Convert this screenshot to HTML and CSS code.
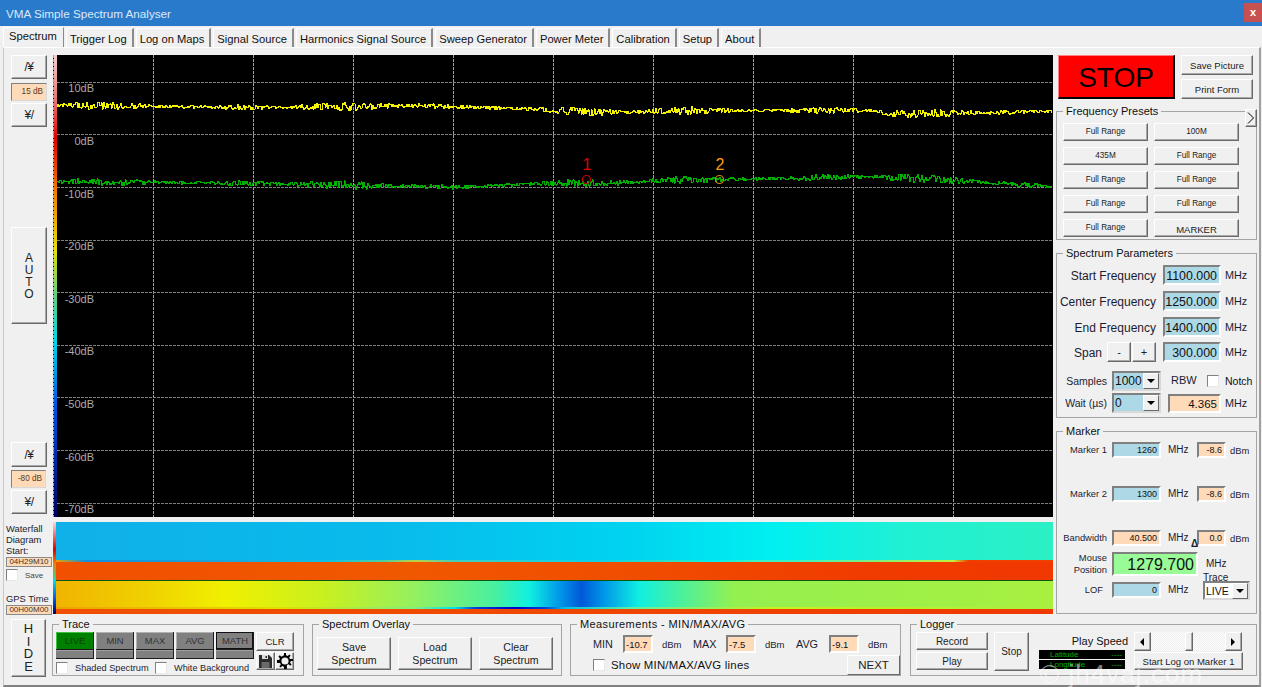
FILE: index.html
```html
<!DOCTYPE html>
<html lang="en">
<head>
  <meta charset="UTF-8">
  <title>VMA Simple Spectrum Analyser</title>
  <link rel="stylesheet" href="styles.css">
</head>
<body>
<div class="window">

  <div class="titlebar">
    <span class="title">VMA Simple Spectrum Analyser</span>
    <span class="close">x</span>
  </div>

  <div class="tabs">
    <div class="tab active">Spectrum</div>
    <div class="tab">Trigger Log</div>
    <div class="tab">Log on Maps</div>
    <div class="tab">Signal Source</div>
    <div class="tab">Harmonics Signal Source</div>
    <div class="tab">Sweep Generator</div>
    <div class="tab">Power Meter</div>
    <div class="tab">Calibration</div>
    <div class="tab">Setup</div>
    <div class="tab">About</div>
  </div>

  <div class="pane">
    <div class="layout">

      <div class="scale-col">
        <button class="btn scale-btn">/&yen;</button>
        <div class="scale-val">15 dB</div>
        <button class="btn scale-btn">&yen;/</button>
        <button class="btn auto-btn">A<br>U<br>T<br>O</button>
        <button class="btn scale-btn low">/&yen;</button>
        <div class="scale-val narrow">-80 dB</div>
        <button class="btn scale-btn">&yen;/</button>
      </div>

      <div class="chart">
        <svg id="plot" width="1000" height="462" viewBox="0 0 1000 462">
          <defs>
            <linearGradient id="colourbar" x1="0" y1="0" x2="0" y2="1">
              <stop offset="0" stop-color="#f4d0d0"/>
              <stop offset="0.1" stop-color="#e87070"/>
              <stop offset="0.18" stop-color="#e00000"/>
              <stop offset="0.3" stop-color="#f08000"/>
              <stop offset="0.42" stop-color="#e8e000"/>
              <stop offset="0.52" stop-color="#60d080"/>
              <stop offset="0.62" stop-color="#00d8e8"/>
              <stop offset="0.76" stop-color="#0050e0"/>
              <stop offset="1" stop-color="#000060"/>
            </linearGradient>
          </defs>
          <rect class="plot-bg" width="1000" height="462"/>
          <g class="grid-v">
            <line x1="0.5" y1="0" x2="0.5" y2="462"/>
            <line x1="100.5" y1="0" x2="100.5" y2="462"/>
            <line x1="200.5" y1="0" x2="200.5" y2="462"/>
            <line x1="300.5" y1="0" x2="300.5" y2="462"/>
            <line x1="400.5" y1="0" x2="400.5" y2="462"/>
            <line x1="500.5" y1="0" x2="500.5" y2="462"/>
            <line x1="600.5" y1="0" x2="600.5" y2="462"/>
            <line x1="700.5" y1="0" x2="700.5" y2="462"/>
            <line x1="800.5" y1="0" x2="800.5" y2="462"/>
            <line x1="900.5" y1="0" x2="900.5" y2="462"/>
          </g>
          <g class="grid-h">
            <line x1="0" y1="27.5" x2="1000" y2="27.5"/>
            <line x1="0" y1="79.5" x2="1000" y2="79.5"/>
            <line x1="0" y1="132.5" x2="1000" y2="132.5"/>
            <line x1="0" y1="185.5" x2="1000" y2="185.5"/>
            <line x1="0" y1="237.5" x2="1000" y2="237.5"/>
            <line x1="0" y1="290.5" x2="1000" y2="290.5"/>
            <line x1="0" y1="342.5" x2="1000" y2="342.5"/>
            <line x1="0" y1="395.5" x2="1000" y2="395.5"/>
            <line x1="0" y1="448.5" x2="1000" y2="448.5"/>
          </g>
          <rect x="1" width="3" height="462" fill="url(#colourbar)"/>
          <g class="db-labels">
            <text x="41" y="37">10dB</text>
            <text x="41" y="90">0dB</text>
            <text x="41" y="143">-10dB</text>
            <text x="41" y="195">-20dB</text>
            <text x="41" y="248">-30dB</text>
            <text x="41" y="300">-40dB</text>
            <text x="41" y="353">-50dB</text>
            <text x="41" y="406">-60dB</text>
            <text x="41" y="458">-70dB</text>
          </g>
          <polyline id="traceMax" class="trace yellow" points=""/>
          <polyline id="traceLive" class="trace green" points=""/>
          <circle class="mark-1" cx="533.5" cy="124.5" r="4"/>
          <circle class="mark-2" cx="666.5" cy="124.5" r="4"/>
          <text class="mark-num red" x="534" y="115">1</text>
          <text class="mark-num orange" x="667" y="115">2</text>
        </svg>
      </div>

      <div class="side">
        <div class="side-top">
          <button class="stop">STOP</button>
          <div class="side-top-btns">
            <button class="btn small-btn">Save Picture</button>
            <button class="btn small-btn">Print Form</button>
          </div>
        </div>

        <fieldset class="group presets">
          <legend>Frequency Presets</legend>
          <button class="btn more-btn">
            <svg width="8" height="12" viewBox="0 0 8 12"><path fill="none" stroke="#000" d="M1 .5l5.500 5.500L1 11.500"/></svg>
          </button>
          <div class="preset-grid">
            <button class="btn preset">Full Range</button>
            <button class="btn preset">100M</button>
            <button class="btn preset">435M</button>
            <button class="btn preset">Full Range</button>
            <button class="btn preset">Full Range</button>
            <button class="btn preset">Full Range</button>
            <button class="btn preset">Full Range</button>
            <button class="btn preset">Full Range</button>
            <button class="btn preset">Full Range</button>
            <button class="btn preset marker-preset">MARKER</button>
          </div>
        </fieldset>

        <fieldset class="group params">
          <legend>Spectrum Parameters</legend>
          <div class="param-row">
            <span class="param-label">Start Frequency</span>
            <div class="field blue param-field">1100.000</div>
            <span class="unit">MHz</span>
          </div>
          <div class="param-row">
            <span class="param-label">Center Frequency</span>
            <div class="field blue param-field">1250.000</div>
            <span class="unit">MHz</span>
          </div>
          <div class="param-row">
            <span class="param-label">End Frequency</span>
            <div class="field blue param-field">1400.000</div>
            <span class="unit">MHz</span>
          </div>
          <div class="param-row span-row">
            <span class="param-label short">Span</span>
            <button class="btn span-btn">-</button>
            <button class="btn span-btn">+</button>
            <div class="field blue param-field">300.000</div>
            <span class="unit">MHz</span>
          </div>
          <div class="sample-row">
            <span class="sample-label">Samples</span>
            <div class="combo blue"><span>1000</span><i class="combo-arrow"></i></div>
            <span class="rbw">RBW</span>
            <input type="checkbox" class="check notch-check">
            <span class="notch">Notch</span>
          </div>
          <div class="sample-row wait">
            <span class="sample-label">Wait (&micro;s)</span>
            <div class="combo blue"><span>0</span><i class="combo-arrow"></i></div>
            <div class="field peach rbw-field">4.365</div>
            <span class="unit">MHz</span>
          </div>
        </fieldset>

        <fieldset class="group marker">
          <legend>Marker</legend>
          <div class="marker-row">
            <span class="marker-label">Marker 1</span>
            <div class="field blue marker-field">1260</div>
            <span class="marker-unit">MHz</span>
            <div class="field peach dbm-field">-8.6</div>
            <span class="marker-dbm">dBm</span>
          </div>
          <div class="marker-row spaced">
            <span class="marker-label">Marker 2</span>
            <div class="field blue marker-field">1300</div>
            <span class="marker-unit">MHz</span>
            <div class="field peach dbm-field">-8.6</div>
            <span class="marker-dbm">dBm</span>
          </div>
          <div class="marker-row spaced">
            <span class="marker-label">Bandwidth</span>
            <div class="field peach marker-field">40.500</div>
            <span class="marker-unit">MHz<b class="delta">&Delta;</b></span>
            <div class="field peach dbm-field">0.0</div>
            <span class="marker-dbm">dBm</span>
          </div>
          <div class="marker-bottom">
            <div class="marker-bottom-left">
              <div class="mouse-row">
                <span class="marker-label">Mouse<br>Position</span>
                <div class="field green-field mouse-field">1279.700</div>
              </div>
              <div class="marker-row lof">
                <span class="marker-label lof-label">LOF</span>
                <div class="field blue marker-field">0</div>
                <span class="marker-unit">MHz</span>
              </div>
            </div>
            <div class="marker-bottom-right">
              <span class="mouse-unit">MHz</span>
              <span class="trace-label">Trace</span>
              <div class="combo live-combo"><span>LIVE</span><i class="combo-arrow"></i></div>
            </div>
          </div>
        </fieldset>
      </div>

      <div class="wf-col">
        <div class="wf-text">Waterfall<br>Diagram<br>Start:</div>
        <div class="time-field">04H29M10</div>
        <div class="wf-save">
          <input type="checkbox" class="check">
          <span>Save</span>
        </div>
        <div class="wf-text gps">GPS Time</div>
        <div class="time-field">00H00M00</div>
      </div>

      <div class="waterfall">
        <div class="wf-strip"></div>
        <div class="wf-bands">
          <div class="band band-a"></div>
          <div class="band band-a-edge"></div>
          <div class="band band-b"></div>
          <div class="band band-line"></div>
          <div class="band band-c"></div>
          <div class="band band-c-edge"></div>
          <div class="band band-d"></div>
        </div>
      </div>

    </div>

    <div class="bottom">
      <button class="btn hide-btn">H<br>I<br>D<br>E</button>

      <fieldset class="group trace-group">
        <legend>Trace</legend>
        <div class="trace-inner">
          <div>
            <div class="toggles">
              <div class="toggle on"><span>LIVE</span><i></i></div>
              <div class="toggle"><span>MIN</span><i></i></div>
              <div class="toggle"><span>MAX</span><i></i></div>
              <div class="toggle"><span>AVG</span><i></i></div>
              <div class="toggle pressed"><span>MATH</span><i></i></div>
            </div>
            <div class="trace-checks">
              <input type="checkbox" class="check">
              <span class="trace-check-text">Shaded Spectrum</span>
              <input type="checkbox" class="check">
              <span class="trace-check-text">White Background</span>
            </div>
          </div>
          <div class="clr-col">
            <button class="btn clr-btn">CLR</button>
            <div class="icon-btns">
              <button class="btn icon-btn">
                <svg width="13" height="13" viewBox="0 0 13 13"><path fill="#2b2b2b" d="M0 0h10l3 3v10H0z"/><path fill="#dcdcdc" d="M3 0h6v4H3z"/><path fill="#2b2b2b" d="M6.5 1h1.500v2H6.500z"/><path fill="#6a6a6a" d="M2.500 7h8v6h-8z"/></svg>
              </button>
              <button class="btn icon-btn">
                <svg width="16" height="16" viewBox="0 0 16 16"><path fill="#000" d="M7 0h2v2.200l1.800.7 1.500-1.500 1.400 1.400-1.500 1.500.7 1.800H16v2h-2.200l-.7 1.800 1.500 1.500-1.400 1.400-1.500-1.500-1.800.7V16H7v-2.200l-1.800-.7-1.500 1.500-1.400-1.400 1.500-1.500-.7-1.800H0V7h2.200l.7-1.800-1.500-1.500 1.400-1.400 1.500 1.500L7 2.200z"/><circle cx="8" cy="8" r="3.600" fill="#f0f0f0"/></svg>
              </button>
            </div>
          </div>
        </div>
      </fieldset>

      <fieldset class="group overlay-group">
        <legend>Spectrum Overlay</legend>
        <div class="overlay-btns">
          <button class="btn overlay-btn">Save<br>Spectrum</button>
          <button class="btn overlay-btn">Load<br>Spectrum</button>
          <button class="btn overlay-btn">Clear<br>Spectrum</button>
        </div>
      </fieldset>

      <fieldset class="group measure-group">
        <legend>Measurements - MIN/MAX/AVG</legend>
        <div class="measure-row">
          <span class="m-label min">MIN</span>
          <div class="field peach m-field">-10.7</div>
          <span class="m-unit">dBm</span>
          <span class="m-label">MAX</span>
          <div class="field peach m-field">-7.5</div>
          <span class="m-unit">dBm</span>
          <span class="m-label">AVG</span>
          <div class="field peach m-field">-9.1</div>
          <span class="m-unit">dBm</span>
        </div>
        <div class="measure-row second">
          <input type="checkbox" class="check">
          <span class="m-show">Show MIN/MAX/AVG lines</span>
          <button class="btn next-btn">NEXT</button>
        </div>
      </fieldset>

      <fieldset class="group logger-group">
        <legend>Logger</legend>
        <div class="logger-inner">
          <div class="logger-col">
            <button class="btn log-btn">Record</button>
            <button class="btn log-btn">Play</button>
          </div>
          <button class="btn log-stop">Stop</button>
          <div class="logger-grid">
            <span class="play-speed">Play Speed</span>
            <div class="scrollbar">
              <button class="btn sb-arrow"><i class="tri-left"></i></button>
              <div class="sb-track"><div class="btn sb-thumb"></div></div>
              <button class="btn sb-arrow"><i class="tri-right"></i></button>
            </div>
            <div class="gps-box">
              <div class="gps-line"><span>Latitude</span><span>----</span></div>
              <div class="gps-line"><span>Longitude</span><span>----</span></div>
            </div>
            <button class="btn start-log">Start Log on Marker 1</button>
          </div>
        </div>
      </fieldset>
    </div>
  </div>

  <div class="watermark">&copy; jh4vaj.com</div>
</div>
<script src="script.js"></script>
</body>
</html>
```

FILE: styles.css
```css
* {
  box-sizing: border-box;
}

html, body {
  margin: 0;
  height: 100%;
}

body {
  background-color: #f0f0f0;
  font-family: 'Liberation Sans', Arial, sans-serif;
  font-size: 12px;
  color: #111;
  overflow: hidden;
}

.window {
  position: relative;
  width: 1262px;
  height: 687px;
  overflow: hidden;
  background-color: #f0f0f0;
}

/* title bar */
.titlebar {
  height: 26px;
  background-color: #2a7acb;
  color: #dbe9f7;
  display: flex;
  align-items: center;
  justify-content: space-between;
  padding-left: 6px;
  padding-top: 1px;
}

.title {
  font-size: 11.7px;
}

.close {
  width: 18px;
  height: 19px;
  margin-top: -2px;
  background-color: #c75050;
  color: #fff;
  font-weight: bold;
  font-size: 11px;
  text-align: center;
  line-height: 18px;
}

/* tabs */
.tabs {
  height: 21px;
  display: flex;
  padding-left: 3px;
  align-items: flex-end;
}

.tab {
  height: 19px;
  padding: 4px 5px 0 3px;
  margin-right: 2px;
  border-left: 1px solid #fff;
  border-top: 1px solid #fff;
  border-right: 2px solid #8a8a8a;
  font-size: 11.2px;
  white-space: nowrap;
}

.tab.active {
  height: 20px;
  padding: 2px 6px 0 5px;
  margin-right: 2px;
  border-right: 1px solid #8a8a8a;
}

/* tab page */
.pane {
  width: 1258px;
  height: 640px;
  margin-left: 3px;
  padding-top: 7px;
  border-left: 1px solid #c8c8c8;
  border-top: 1px solid #fff;
  border-right: 2px solid #a0a0a0;
  border-bottom: 2px solid #808080;
}

.layout {
  display: grid;
  grid-template-columns: 49px 1000px 204px;
  grid-template-rows: 462px 92px;
  row-gap: 5px;
}

/* generic bevelled controls */
.btn {
  display: block;
  margin: 0;
  padding: 0;
  background-color: #f0f0f0;
  border-style: solid;
  border-width: 1px;
  border-color: #fff #696969 #696969 #fff;
  box-shadow: inset -1px -1px 0 #a8a8a8;
  font-family: inherit;
  color: #222;
  text-align: center;
}

.field {
  border-style: solid;
  border-width: 2px;
  border-color: #808080 #fff #fff #808080;
  text-align: right;
  padding-right: 2px;
  white-space: nowrap;
}

.blue {
  background-color: #add8e6;
}

.peach {
  background-color: #ffdab9;
}

.green-field {
  background-color: #98fb98;
}

.check {
  appearance: none;
  display: block;
  width: 12px;
  height: 12px;
  margin: 0;
  flex: none;
  background-color: #fff;
  border-style: solid;
  border-width: 1px;
  border-color: #808080 #e8e8e8 #e8e8e8 #808080;
}

.combo {
  display: flex;
  align-items: center;
  justify-content: space-between;
  width: 49px;
  height: 20px;
  border-style: solid;
  border-width: 2px;
  border-color: #808080 #d8d8d8 #d8d8d8 #808080;
  font-size: 12px;
  padding-left: 1px;
}

.combo-arrow {
  display: block;
  width: 16px;
  height: 16px;
  position: relative;
  background-color: #f0f0f0;
  border-style: solid;
  border-width: 1px;
  border-color: #fff #696969 #696969 #fff;
}

.combo-arrow::after {
  content: "";
  position: absolute;
  left: 3px;
  top: 5px;
  border-style: solid;
  border-width: 4px 4px 0 4px;
  border-color: #000 transparent transparent transparent;
}

/* group boxes */
.group {
  margin: 0;
  padding: 0;
  min-width: 0;
  border: 1px solid #a4a4a4;
}

.group legend {
  height: 14px;
  line-height: 14px;
  margin-left: 6px;
  padding: 0 3px;
  font-size: 11px;
}

/* left column next to the plot */
.scale-col {
  padding-left: 7px;
  display: flex;
  flex-direction: column;
}

.scale-btn {
  width: 36px;
  height: 24px;
  font-size: 12px;
  letter-spacing: -0.5px;
  font-family: 'Liberation Sans', 'Noto Sans CJK JP', sans-serif;
}

.scale-btn.low {
  height: 25px;
  margin-top: 118px;
}

.scale-val {
  width: 36px;
  height: 18px;
  margin: 4px 0 2px;
  background-color: #ffdab9;
  border: 1px solid #808080;
  border-color: #808080 #d8d8d8 #d8d8d8 #808080;
  font-size: 8.2px;
  line-height: 16px;
  text-align: right;
  padding-right: 3px;
  color: #5a3a20;
}

.scale-val.narrow {
  width: 35px;
  margin: 3px 0 2px;
}

.auto-btn {
  width: 36px;
  height: 97px;
  margin-top: 100px;
  font-size: 12px;
  line-height: 12px;
}

.chart svg {
  display: block;
}

.plot-bg {
  fill: #000;
}

.grid-v line {
  stroke: #a0a0a0;
  stroke-dasharray: 3 1;
  shape-rendering: crispEdges;
}

.grid-h line {
  stroke: #808080;
  stroke-dasharray: 3 1;
  shape-rendering: crispEdges;
}

.db-labels text {
  fill: #ababab;
  font-size: 11px;
  text-anchor: end;
}

.trace {
  fill: none;
  stroke-width: 1;
  shape-rendering: crispEdges;
}

.yellow {
  stroke: #f4f400;
}

.green {
  stroke: #00b000;
}

.mark-1, .mark-2 {
  fill: none;
  stroke-width: 1.2;
}

.mark-1 {
  stroke: #d00000;
}

.mark-2 {
  stroke: #d08810;
}

.mark-num {
  font-size: 16px;
  text-anchor: middle;
}

.mark-num.red {
  fill: #e00000;
}

.mark-num.orange {
  fill: #ff9a10;
}

/* right hand side */
.side {
  grid-column: 3;
  grid-row: 1 / span 2;
  padding-left: 3px;
}

.side-top {
  display: flex;
  padding-left: 2px;
  height: 44px;
}

.stop {
  width: 117px;
  height: 44px;
  margin: 0;
  padding: 2px 0 0;
  background-color: #ff0000;
  border-style: solid;
  border-width: 1px 2px 2px 1px;
  border-color: #ff8080 #000 #000 #ff8080;
  font-family: inherit;
  font-size: 28px;
  color: #000;
}

.side-top-btns {
  margin-left: 6px;
  display: flex;
  flex-direction: column;
  gap: 4px;
}

.small-btn {
  width: 72px;
  height: 20px;
  font-size: 9.5px;
}

.presets {
  position: relative;
  width: 201px;
  height: 136px;
  margin-top: 5px;
  padding-top: 5px;
}

.more-btn {
  position: absolute;
  right: -1px;
  top: -9px;
  width: 12px;
  height: 18px;
  display: flex;
  align-items: center;
  justify-content: center;
}

.preset-grid {
  display: grid;
  grid-template-columns: 85px 85px;
  grid-auto-rows: 18px;
  gap: 6px;
  margin-left: 6px;
}

.preset {
  font-size: 8.2px;
  padding-bottom: 1px;
}

.marker-preset {
  font-size: 9.5px;
  padding: 3px 0 0;
}

.params {
  width: 201px;
  height: 172px;
  margin-top: 6px;
  padding-top: 5px;
}

.param-row {
  display: flex;
  align-items: center;
  height: 20px;
  margin-bottom: 6px;
}

.span-row {
  margin-top: -1px;
}

.param-label {
  width: 99px;
  margin-right: 7px;
  padding-top: 1px;
  text-align: right;
  font-size: 12px;
  color: #1c1c30;
  white-space: nowrap;
}

.param-label.short {
  width: 45px;
  margin-right: 5px;
}

.param-field {
  width: 58px;
  height: 20px;
  font-size: 12.4px;
  line-height: 18px;
}

.span-btn {
  width: 24px;
  height: 20px;
  margin-right: 1px;
  font-size: 11px;
}

.span-btn + .param-field {
  margin-left: 6px;
}

.unit {
  margin-left: 4px;
  font-size: 10.8px;
  color: #1c1c30;
}

.sample-row {
  display: flex;
  align-items: center;
  height: 20px;
  margin-top: 9px;
}

.sample-row.wait {
  margin-top: 2px;
}

.sample-label {
  width: 50px;
  margin-right: 5px;
  margin-bottom: 1px;
  text-align: right;
  font-size: 10.5px;
  color: #1c1c30;
  white-space: nowrap;
}

.rbw {
  margin-left: 10px;
  margin-bottom: 2px;
  width: 36px;
  font-size: 11px;
  color: #1c1c30;
}

.notch {
  margin-left: 6px;
  font-size: 10.5px;
}

.rbw-field {
  width: 53px;
  height: 19px;
  margin: 1px 0 0 7px;
  font-size: 11.5px;
  line-height: 16px;
}

.marker {
  width: 201px;
  height: 190px;
  margin-top: 6px;
  padding-top: 4px;
}

.marker-row {
  display: flex;
  align-items: center;
  height: 16px;
}

.marker-row.spaced {
  margin-top: 28px;
}

.marker-label {
  width: 50px;
  margin-right: 5px;
  margin-bottom: 1px;
  flex: none;
  text-align: right;
  font-size: 9.4px;
  line-height: 12px;
  color: #1c1c30;
  white-space: nowrap;
}

.lof-label {
  width: 46px;
  margin-right: 9px;
}

.marker-field {
  width: 49px;
  height: 16px;
  font-size: 9px;
  line-height: 13px;
}

.marker-unit {
  position: relative;
  width: 36px;
  padding-left: 7px;
  margin-bottom: 1px;
  font-size: 10px;
  color: #1c1c30;
  flex: none;
}

.delta {
  position: absolute;
  left: 30px;
  top: 7px;
  font-size: 10px;
  line-height: 10px;
}

.dbm-field {
  width: 29px;
  height: 16px;
  font-size: 9px;
  line-height: 13px;
}

.marker-dbm {
  margin-left: 4px;
  font-size: 9.4px;
  color: #1c1c30;
}

.marker-bottom {
  display: flex;
  margin-top: 6px;
}

.marker-bottom-left {
  width: 146px;
}

.mouse-row {
  display: flex;
  align-items: center;
  height: 24px;
}

.mouse-field {
  width: 86px;
  height: 24px;
  font-size: 16px;
  line-height: 21px;
  flex: none;
}

.lof {
  margin-top: 6px;
}

.marker-bottom-right {
  display: flex;
  flex-direction: column;
}

.mouse-unit {
  margin: 6px 0 0 3px;
  font-size: 10px;
  line-height: 12px;
  color: #1c1c30;
}

.trace-label {
  margin-top: 2px;
  font-size: 10px;
  line-height: 11px;
  color: #1c1c30;
}

.live-combo {
  width: 47px;
  height: 19px;
  margin-top: -2px;
  background-color: #fff;
  font-size: 10.5px;
}

/* waterfall */
.wf-col {
  grid-column: 1;
  grid-row: 2;
  padding: 1px 0 0 2px;
  display: flex;
  flex-direction: column;
}

.wf-text {
  font-size: 9.4px;
  line-height: 11px;
  color: #1a2430;
}

.wf-text.gps {
  margin-top: 12px;
}

.time-field {
  width: 46px;
  height: 10px;
  margin-top: 1px;
  background-color: #ffdab9;
  border: 1px solid #8a8a8a;
  font-size: 8px;
  line-height: 8px;
  text-align: center;
  color: #443322;
}

.wf-save {
  display: flex;
  align-items: center;
  gap: 7px;
  margin-top: 2px;
  font-size: 8px;
  color: #444;
}

.waterfall {
  grid-column: 2;
  grid-row: 2;
  display: flex;
}

.wf-strip {
  width: 3px;
  background: linear-gradient(#f8d8d8 0, #e00000 30%, #f08000 45%, #40d080 60%, #00d8e8 64%, #0050e0 85%, #000060 100%);
}

.wf-bands {
  flex: 1;
  display: flex;
  flex-direction: column;
}

.band-a {
  height: 38px;
  background: linear-gradient(90deg, #10b0e8 0, #08bcec 35%, #00d4f0 58%, #00f0f0 72%, #20f0d4 85%, #2cf0c4 100%);
}

.band-a-edge {
  height: 2px;
  background: linear-gradient(90deg, #f0a000 0, #1090e0 3%, #20a0d8 14%, #10c0e8 27%, #50d0a0 33%, #c0d040 36%, #40d0c0 40%, #10d0e8 54%, #30e0c0 62%, #00f0f0 66%, #40f0c0 70%, #40f0c0 74%, #c0f040 90%, #f04000 91.5%, #f04000 100%);
}

.band-b {
  height: 18px;
  background: linear-gradient(90deg, #f05000 0, #f05800 35%, #f04c00 60%, #f03c00 80%, #f03800 100%);
}

.band-line {
  height: 1px;
  background-color: #0a5a10;
}

.band-c {
  height: 26px;
  background: linear-gradient(90deg, #f0b400 0, #f0d000 9%, #f0f000 17%, #c8f020 27%, #94f060 36%, #48f0a0 44%, #10f0e0 47.5%, #0098e8 50.5%, #0058d8 52.7%, #0098e8 55%, #10f0e0 58.5%, #48f0a0 62.5%, #94f050 68%, #a8f040 100%);
}

.band-c-edge {
  height: 2px;
  background: linear-gradient(90deg, #f0a000 0, #e0e000 22%, #80f080 36%, #00e0f0 40%, #0040d8 42%, #0000c8 46%, #0040d8 49%, #00c0e8 51%, #60f0a0 58%, #c8f020 72%, #a8f040 100%);
}

.band-d {
  height: 5px;
  background: linear-gradient(90deg, #f05000 0, #f04800 50%, #f03800 100%);
}

/* bottom controls */
.bottom {
  display: flex;
  align-items: flex-start;
  margin-top: 3px;
  padding-left: 7px;
}

.hide-btn {
  width: 35px;
  height: 58px;
  margin: 2px 6px 0 0;
  font-size: 13px;
  line-height: 12.5px;
  flex: none;
}

.trace-group {
  width: 252px;
  height: 59px;
  margin-right: 8px;
  padding-top: 1px;
}

.trace-inner {
  display: flex;
  gap: 2px;
  margin-left: 3px;
}

.toggles {
  display: flex;
  gap: 2px;
}

.toggle {
  width: 38px;
  height: 27px;
  background-color: #1c1c1c;
  padding: 0 1px 1px 0;
  display: flex;
  flex-direction: column;
  gap: 1px;
}

.toggle span {
  height: 17px;
  background-color: #808080;
  border-top: 1px solid #b0b0b0;
  border-left: 1px solid #b0b0b0;
  font-size: 9.4px;
  line-height: 16px;
  text-align: center;
  color: #333;
}

.toggle i {
  height: 8px;
  background-color: #808080;
  border-top: 1px solid #a0a0a0;
}

.toggle.on span {
  background-color: #008000;
  border-color: #40c040;
  color: #064006;
}

.toggle.pressed span {
  outline: 1px solid #111;
  outline-offset: -1px;
}

.trace-checks {
  display: flex;
  align-items: center;
  margin-top: 3px;
}

.trace-check-text {
  margin-left: 7px;
  width: 80px;
  font-size: 9.2px;
  color: #1c1c30;
  white-space: nowrap;
}

.clr-col {
  width: 38px;
}

.clr-btn {
  width: 38px;
  height: 19px;
  font-size: 9.5px;
}

.icon-btns {
  display: flex;
  margin-top: 1px;
}

.icon-btn {
  width: 19px;
  height: 18px;
  display: flex;
  align-items: center;
  justify-content: center;
}

.overlay-group {
  width: 250px;
  height: 59px;
  margin-right: 8px;
  padding-top: 6px;
}

.overlay-btns {
  display: flex;
  gap: 7px;
  margin-left: 4px;
}

.overlay-btn {
  width: 74px;
  height: 33px;
  font-size: 10.6px;
  line-height: 13px;
}

.measure-group {
  width: 331px;
  height: 59px;
  margin-right: 9px;
  padding-top: 4px;
}

.measure-group legend {
  letter-spacing: 0.4px;
}

.measure-row {
  display: flex;
  align-items: center;
  height: 18px;
  padding-left: 22px;
}

.measure-row.second {
  height: 20px;
  margin-top: 2px;
}

.m-label {
  width: 33px;
  font-size: 10.8px;
  color: #1c1c30;
}

.m-label.min {
  width: 30px;
}

.m-field {
  width: 30px;
  height: 18px;
  font-size: 9.5px;
  line-height: 15px;
  text-align: left;
  padding: 0 0 0 1px;
}

.m-unit {
  width: 40px;
  padding-left: 9px;
  font-size: 9.5px;
  color: #1c1c30;
}

.m-show {
  margin-left: 6px;
  font-size: 11.4px;
  letter-spacing: 0.02em;
}

.next-btn {
  width: 53px;
  height: 20px;
  margin-left: auto;
  font-size: 11.5px;
  box-shadow: none;
}

.logger-group {
  width: 347px;
  height: 59px;
  padding-top: 1px;
}

.logger-inner {
  display: flex;
  align-items: flex-start;
  margin-left: 5px;
}

.logger-col {
  display: flex;
  flex-direction: column;
  gap: 2px;
}

.log-btn {
  width: 72px;
  height: 18px;
  font-size: 10px;
}

.log-stop {
  width: 35px;
  height: 39px;
  margin: 0 10px 0 6px;
  font-size: 10px;
}

.logger-grid {
  display: grid;
  grid-template-columns: 86px 109px;
  grid-template-rows: 20px 18px;
  column-gap: 9px;
}

.play-speed {
  justify-self: end;
  margin-right: -3px;
  font-size: 11px;
  line-height: 18px;
}

.scrollbar {
  display: flex;
  height: 19px;
}

.sb-arrow {
  width: 17px;
  height: 19px;
  position: relative;
}

.tri-left, .tri-right {
  position: absolute;
  top: 5px;
  left: 5px;
  border-style: solid;
  border-color: transparent;
}

.tri-left {
  border-width: 4px 4px 4px 0;
  border-right-color: #000;
}

.tri-right {
  border-width: 4px 0 4px 4px;
  border-left-color: #000;
}

.sb-track {
  width: 74px;
  padding-left: 34px;
  background-color: #fff;
  background-image: repeating-conic-gradient(#ececec 0 25%, #fff 0 50%);
  background-size: 2px 2px;
}

.sb-thumb {
  width: 8px;
  height: 19px;
}

.gps-box {
  width: 86px;
  margin-top: -2px;
  display: flex;
  flex-direction: column;
  gap: 1px;
  font-size: 8px;
}

.gps-line {
  display: flex;
  justify-content: space-between;
  height: 9px;
  line-height: 9px;
  padding: 0 3px 0 11px;
  background-color: #000;
  color: #00b000;
}

.start-log {
  width: 109px;
  height: 18px;
  font-size: 9.5px;
}

/* faint site mark burnt into the screenshot */
.watermark {
  position: absolute;
  left: 1040px;
  top: 659px;
  font-size: 26px;
  line-height: 30px;
  letter-spacing: 0.04em;
  color: rgba(255, 255, 255, 0.5);
  white-space: nowrap;
  pointer-events: none;
}
```

FILE: script.js
```js
// draws the two spectrum traces, fixed seed so the picture stays the same
let seed = 4711;

function rnd() {
  seed = (seed * 1103515245 + 12345) % 2147483648;
  return seed / 2147483648;
}

function baseAt(keys, x) {
  for (let i = 1; i < keys.length; i++) {
    if (x <= keys[i][0]) {
      const a = keys[i - 1];
      const b = keys[i];
      return a[1] + (b[1] - a[1]) * (x - a[0]) / (b[0] - a[0]);
    }
  }
  return keys[keys.length - 1][1];
}

function makeTrace(id, keys, amp) {
  const pts = [];
  for (let x = 4; x <= 999; x += 1) {
    // bursts of noise with flatter stretches between them
    const burst = 0.35 + 0.9 * Math.abs(Math.sin(x / 37) * Math.cos(x / 91));
    const noise = (rnd() - 0.5) * amp * burst;
    pts.push(x + ',' + (Math.round(baseAt(keys, x) + noise) + 0.5));
  }
  document.getElementById(id).setAttribute('points', pts.join(' '));
}

makeTrace('traceMax', [
  [0, 50], [210, 52], [370, 50], [490, 54], [550, 57], [590, 56],
  [630, 55], [730, 55], [820, 55], [835, 58], [950, 57], [1000, 56]
], 7);

makeTrace('traceLive', [
  [0, 126], [210, 128], [370, 131], [400, 132], [490, 128], [570, 127],
  [610, 125], [670, 124], [730, 123], [800, 121], [850, 122], [950, 128], [1000, 131]
], 7);
```
